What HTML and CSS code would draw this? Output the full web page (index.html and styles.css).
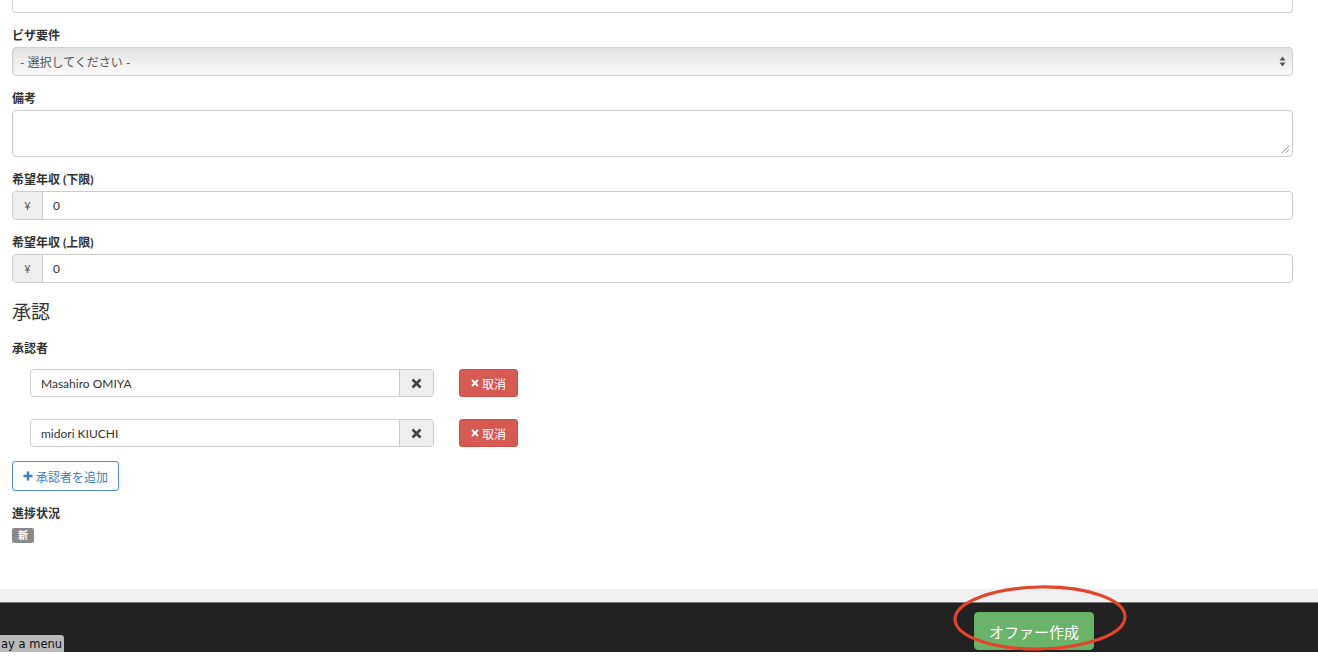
FILE: index.html
```html
<!DOCTYPE html>
<html lang="ja">

<head>
    <meta charset="UTF-8">
    <title>オファー作成</title>
    <link rel="stylesheet" href="styles.css">
</head>

<body>
    <div class="page">
        <div class="field-tail"></div>

        <div class="form-group first">
            <label>ビザ要件</label>
            <div class="select">
                <span>- 選択してください -</span>
                <svg class="select-arrow" width="7" height="11" viewBox="0 0 7 11">
                    <path d="M3.5 0.5 L6.5 4.5 H0.5 Z M3.5 10.5 L6.5 6.5 H0.5 Z" fill="#555" />
                </svg>
            </div>
        </div>

        <div class="form-group">
            <label>備考</label>
            <div class="textarea">
                <svg class="grip" width="9" height="9" viewBox="0 0 9 9">
                    <path d="M1 8 L8 1 M4.5 8 L8 4.5" stroke="#999" stroke-width="1" />
                </svg>
            </div>
        </div>

        <div class="form-group">
            <label>希望年収 (下限)</label>
            <div class="input-group">
                <span class="addon">¥</span>
                <span class="control">0</span>
            </div>
        </div>

        <div class="form-group">
            <label>希望年収 (上限)</label>
            <div class="input-group">
                <span class="addon">¥</span>
                <span class="control">0</span>
            </div>
        </div>

        <h3 class="section-title">承認</h3>

        <div class="approvers">
            <label>承認者</label>

            <div class="approver-row">
                <div class="input-group approver">
                    <span class="control">Masahiro OMIYA</span>
                    <span class="addon clear">
                        <svg width="11" height="11" viewBox="0 0 11 11"><path d="M1.5 1.5 L9.5 9.5 M9.5 1.5 L1.5 9.5" stroke="#444" stroke-width="2.6" /></svg>
                    </span>
                </div>
                <button class="btn btn-danger">
                    <svg width="8" height="8" viewBox="0 0 8 8"><path d="M1 1 L7 7 M7 1 L1 7" stroke="#fff" stroke-width="2" /></svg>取消
                </button>
            </div>

            <div class="approver-row">
                <div class="input-group approver">
                    <span class="control">midori KIUCHI</span>
                    <span class="addon clear">
                        <svg width="11" height="11" viewBox="0 0 11 11"><path d="M1.5 1.5 L9.5 9.5 M9.5 1.5 L1.5 9.5" stroke="#444" stroke-width="2.6" /></svg>
                    </span>
                </div>
                <button class="btn btn-danger">
                    <svg width="8" height="8" viewBox="0 0 8 8"><path d="M1 1 L7 7 M7 1 L1 7" stroke="#fff" stroke-width="2" /></svg>取消
                </button>
            </div>

            <button class="btn btn-add">
                <svg width="10" height="10" viewBox="0 0 10 10"><path d="M5 0.5 V9.5 M0.5 5 H9.5" stroke="#3c7fc4" stroke-width="2.4" /></svg>承認者を追加
            </button>
        </div>

        <div class="status">
            <label>進捗状況</label>
            <span class="badge">新</span>
        </div>
    </div>

    <div class="strip"></div>

    <footer class="action-bar">
        <div class="actions">
            <button class="btn btn-success">オファー作成</button>
            <svg class="mark" width="180" height="72" viewBox="0 0 180 72">
                <ellipse cx="89" cy="34" rx="85" ry="31" fill="none" stroke="#e5432d" stroke-width="3.2" transform="rotate(-1 89 34)" />
            </svg>
        </div>
        <span class="menu-tip">ay a menu</span>
    </footer>
    <div class="bottom-gap"></div>
</body>

</html>
```

FILE: styles.css
```css
body {
    margin: 0;
    font-family: Lato, "Noto Sans CJK JP", sans-serif;
    font-size: 12px;
    color: #333;
    background: #fff;
}

.page {
    height: 589px;
    box-sizing: border-box;
    padding: 0 25px 0 12px;
}

label {
    display: block;
    height: 17px;
    font-weight: bold;
    line-height: 17px;
    margin-bottom: 3px;
}

.field-tail {
    height: 12px;
    border: 1px solid #d0d0d0;
    border-top: none;
    border-radius: 0 0 4px 4px;
}

.form-group {
    margin-top: 14px;
}

.select {
    height: 29px;
    box-sizing: border-box;
    display: flex;
    align-items: center;
    justify-content: space-between;
    padding: 0 6px 0 7px;
    border: 1px solid #d2d2d2;
    border-radius: 4px;
    background: linear-gradient(#e2e2e2, #f0f0f0 55%, #fbfbfb);
    box-shadow: inset 1px 0 2px rgba(0, 0, 0, 0.08);
    color: #555;
}

.textarea {
    position: relative;
    height: 47px;
    box-sizing: border-box;
    border: 1px solid #ccc;
    border-radius: 4px;
}

.grip {
    position: absolute;
    right: 2px;
    bottom: 2px;
}

.input-group {
    display: flex;
    height: 29px;
    box-sizing: border-box;
    border: 1px solid #ccc;
    border-radius: 4px;
    overflow: hidden;
}

.input-group .addon {
    width: 29px;
    display: flex;
    align-items: center;
    justify-content: center;
    background: #eee;
    border-right: 1px solid #ccc;
    color: #555;
    font-size: 11px;
}

.input-group .control {
    flex: 1;
    display: flex;
    align-items: center;
    padding-left: 10px;
    color: #333;
}

.section-title {
    margin: 16px 0 0;
    font-size: 19px;
    font-weight: normal;
    line-height: 26px;
}

.approvers {
    margin-top: 15px;
}

.approvers label {
    margin-bottom: 12px;
}

.approver-row {
    display: flex;
    align-items: center;
    gap: 25px;
    padding-left: 18px;
    margin-bottom: 22px;
}

.approver-row + .approver-row {
    margin-bottom: 14px;
}

.input-group.approver {
    width: 404px;
    height: 28px;
}

.input-group.approver .addon {
    width: 33px;
    border-right: none;
    border-left: 1px solid #ccc;
}

.btn {
    display: inline-flex;
    align-items: center;
    box-sizing: border-box;
    border: 1px solid transparent;
    border-radius: 3px;
    font-family: inherit;
    cursor: pointer;
}

.btn-danger {
    width: 59px;
    height: 28px;
    justify-content: center;
    gap: 3px;
    background: #d65a52;
    border-color: #cc4f48;
    color: #fff;
    font-size: 12px;
    padding: 0;
}

.btn-add {
    height: 30px;
    padding: 0 10px 0 10px;
    gap: 3px;
    background: #fff;
    border-color: #4d8fd1;
    color: #3c7fc4;
    font-size: 12px;
}

.status {
    margin-top: 14px;
}

.status label {
    margin-bottom: 6px;
}

.badge {
    display: block;
    width: 22px;
    height: 15px;
    line-height: 15px;
    text-align: center;
    background: #8a8a8a;
    color: #fff;
    font-size: 10px;
    font-weight: bold;
    border-radius: 2px;
}

.strip {
    height: 13px;
    background: #f0f0f0;
}

.action-bar {
    position: relative;
    height: 50px;
    box-sizing: border-box;
    background: #222;
    border-top: 1px solid #7a7a7a;
    padding-top: 9px;
}

.actions {
    position: relative;
    margin-left: 974px;
    width: 120px;
}

.btn-success {
    width: 120px;
    height: 38px;
    justify-content: center;
    background: #6ab469;
    border-color: #64ad63;
    border-radius: 4px;
    color: #fff;
    font-size: 15px;
    padding: 0;
}

.mark {
    position: absolute;
    left: -23px;
    top: -28px;
    pointer-events: none;
}

.menu-tip {
    position: absolute;
    left: 0;
    bottom: 0;
    width: 64px;
    height: 17px;
    box-sizing: border-box;
    padding-left: 1px;
    background: #b9b9b9;
    border-radius: 0 3px 0 0;
    color: #111;
    font-family: "DejaVu Sans", sans-serif;
    font-size: 11.5px;
    line-height: 19px;
    overflow: hidden;
    white-space: nowrap;
}

.bottom-gap {
    height: 10px;
}
```
